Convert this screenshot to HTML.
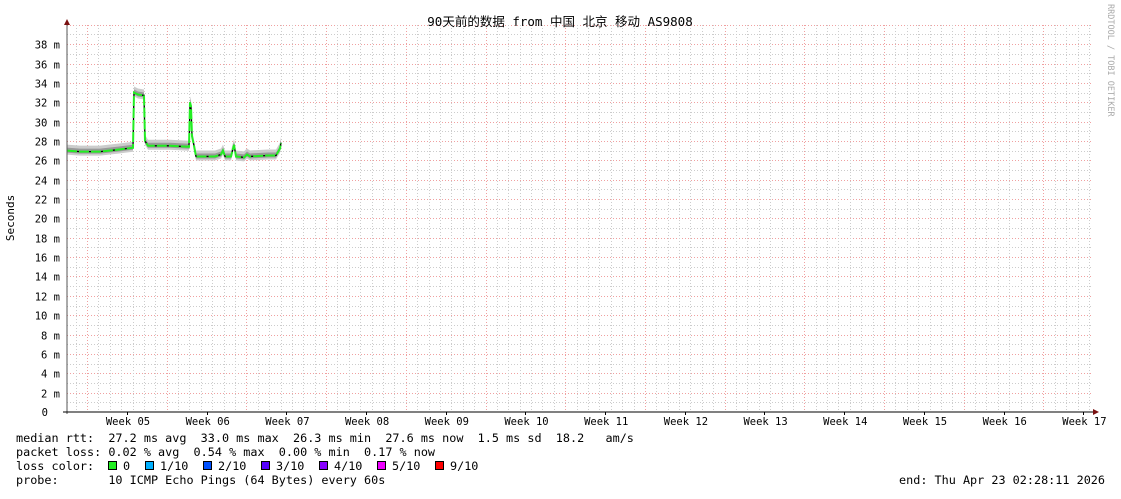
<!DOCTYPE html>
<html><head><meta charset="utf-8"><style>
body{margin:0;background:#fff;width:1121px;height:494px;overflow:hidden}
svg text{font-family:"DejaVu Sans Mono","Liberation Mono",monospace;font-size:10.5px;fill:#000;white-space:pre}
.lg{font-size:11.8px}
</style></head><body>
<svg id="s" width="1121" height="494" xmlns="http://www.w3.org/2000/svg" xml:space="preserve">
<g id="grid"></g>
<text x="560" y="26" text-anchor="middle" style="font-family:'DejaVu Sans Mono','Noto Sans CJK SC',monospace;font-size:12.5px">90天前的数据 from 中国 北京 移动 AS9808</text>
<text transform="translate(1108,4) rotate(90)" style="font-size:8.5px;fill:#aaa">RRDTOOL / TOBI OETIKER</text>
<text transform="translate(14,218) rotate(-90)" text-anchor="middle" style="font-size:11px">Seconds</text>
<g id="ylab" text-anchor="end"></g>
<g id="xlab" text-anchor="middle"></g>
<g id="data"></g>
<line x1="67" y1="22" x2="67" y2="414" stroke="#555"/>
<line x1="63" y1="412" x2="1095" y2="412" stroke="#000"/>
<polygon points="64,25 70,25 67,19" fill="#7a1010"/>
<polygon points="1093,409 1093,415 1099,412" fill="#7a1010"/>
<text class="lg" x="16" y="442">median rtt:  27.2 ms avg  33.0 ms max  26.3 ms min  27.6 ms now  1.5 ms sd  18.2   am/s</text>
<text class="lg" x="16" y="456">packet loss: 0.02 % avg  0.54 % max  0.00 % min  0.17 % now</text>
<text class="lg" x="16" y="470">loss color:</text>
<text class="lg" x="16" y="484">probe:       10 ICMP Echo Pings (64 Bytes) every 60s</text>
<text class="lg" x="1105" y="484" text-anchor="end">end: Thu Apr 23 02:28:11 2026</text>
<g id="leg"></g>
</svg>
<script>
var NS="http://www.w3.org/2000/svg";
function el(p,t,a,txt){var e=document.createElementNS(NS,t);for(var k in a)e.setAttribute(k,a[k]);if(txt)e.textContent=txt;p.appendChild(e);return e}
var g=document.getElementById('grid'),yl=document.getElementById('ylab'),xl=document.getElementById('xlab');
function Y(v){return 412-v*9.68}
for(var v=1;v<=40;v++){var y=Math.round(Y(v))+.5;el(g,'line',{x1:67,x2:1093,y1:y,y2:y,stroke:v%2?'#ccc':'#f0a0a0','stroke-dasharray':'1,2'});
 if(v%2==0&&v<=38)el(yl,'text',{x:60,y:y+4},v+' m')}
el(yl,'text',{x:48,y:416},'0');
for(var x=87-79.7/7*1;x<1093;x+=79.7/7){var xx=Math.round(x)+.5;if(xx<68)continue;el(g,'line',{x1:xx,x2:xx,y1:25,y2:412,stroke:'#ccc','stroke-dasharray':'1,2'})}
for(var i=0;i<13;i++){var xx=Math.round(87+i*79.7)+.5;el(g,'line',{x1:xx,x2:xx,y1:25,y2:412,stroke:'#f0a0a0','stroke-dasharray':'1,2'});
 el(xl,'text',{x:128+i*79.7,y:425},'Week '+String(5+i).padStart(2,'0'))}
for(var i=0;i<=13;i++){var xx=Math.round(87+i*79.7-79.7/2)+.5;if(xx>67)el(g,'line',{x1:xx,x2:xx,y1:412,y2:415,stroke:'#000'})}
var pts=[[67,27],[80,26.9],[100,26.9],[118,27.1],[133,27.3],[134,33],[138,32.8],[144,32.7],[145,28],[148,27.5],[170,27.5],[189,27.4],[190,32],[191,31.6],[192,28.5],[194,27.5],[196,26.4],[215,26.4],[221,26.6],[223,27],[225,26.4],[231,26.4],[234,27.6],[236,26.4],[244,26.3],[247,26.6],[250,26.4],[268,26.5],[276,26.5],[280,27.2],[281,27.8]];
var d=document.getElementById('data');
var up=pts.map(function(p){return p[0]+','+(Y(p[1])-6)}),dn=pts.slice().reverse().map(function(p){return p[0]+','+(Y(p[1])+4)});
el(d,'polygon',{points:up.concat(dn).join(' '),fill:'#ccc'});
var up2=pts.map(function(p){return p[0]+','+(Y(p[1])-3)}),dn2=pts.slice().reverse().map(function(p){return p[0]+','+(Y(p[1])+2)});
el(d,'polygon',{points:up2.concat(dn2).join(' '),fill:'#999'});
var s=pts.map(function(p){return p[0]+','+Y(p[1])}).join(' ');
el(d,'polyline',{points:s,fill:'none',stroke:'#000','stroke-width':1.3});
el(d,'polyline',{points:s,fill:'none',stroke:'#22ee22','stroke-width':2,'stroke-dasharray':'10,2'});
var lg=document.getElementById('leg'),cols=[['#22ee22','0',108],['#00b0ff','1/10',145],['#0050ff','2/10',203],['#5500ff','3/10',261],['#8800ff','4/10',319],['#ee00ff','5/10',377],['#ff0000','9/10',435]];
cols.forEach(function(c){el(lg,'rect',{x:c[2]+.5,y:461.5,width:8,height:8,fill:c[0],stroke:'#000'});el(lg,'text',{x:c[2]+15,y:470,'class':'lg'},c[1])});
</script>
</body></html>
